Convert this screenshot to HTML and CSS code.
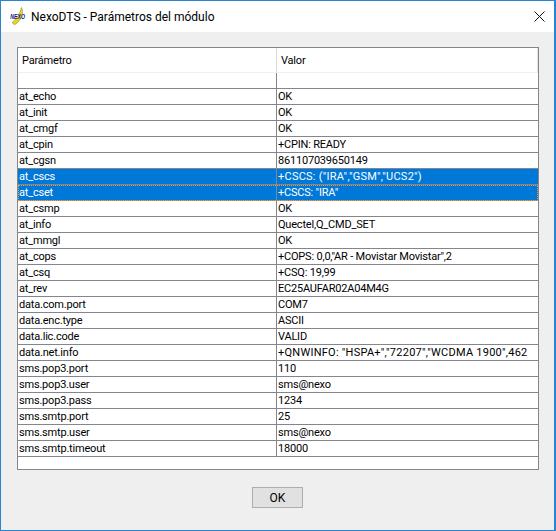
FILE: index.html
```html
<!DOCTYPE html>
<html lang="es">
<head>
  <meta charset="UTF-8" />
  <title>NexoDTS - Parámetros del módulo</title>
  <link rel="stylesheet" href="styles.css">
</head>
<body>
  <div class="window">
    <div class="titlebar">
      <svg class="logo" width="16" height="18" viewBox="0 0 16 18">
        <path d="M11.5 0.5 C14 5 12 13 5 17.5 C3.5 17.5 2.5 16.5 2.5 15 C7 12 10 6 11.5 0.5 Z" fill="#e8d81c" stroke="#7d7a30" stroke-width="0.5"/>
        <text x="0.3" y="8.9" transform="scale(1 1.3)" class="logo-text">NEXO</text>
      </svg>
      <span class="title">NexoDTS - Parámetros del módulo</span>
      <svg class="close" width="11" height="11" viewBox="0 0 11 11">
        <path d="M0.5 0.5 L10.5 10.5 M10.5 0.5 L0.5 10.5" stroke="#111" stroke-width="1" fill="none"/>
      </svg>
    </div>
    <div class="content">
      <div class="grid">
        <div class="grid-header">
          <div class="col-a">Parámetro</div>
          <div class="col-b">Valor</div>
        </div>
        <div class="filter-row">
          <div class="col-a"></div>
          <div class="col-b"></div>
        </div>
        <div class="rows">
          <div class="row"><div class="col-a">at_echo</div><div class="col-b">OK</div></div>
          <div class="row"><div class="col-a">at_init</div><div class="col-b">OK</div></div>
          <div class="row"><div class="col-a">at_cmgf</div><div class="col-b">OK</div></div>
          <div class="row"><div class="col-a">at_cpin</div><div class="col-b">+CPIN: READY</div></div>
          <div class="row"><div class="col-a">at_cgsn</div><div class="col-b">861107039650149</div></div>
          <div class="row selected"><div class="col-a">at_cscs</div><div class="col-b loose">+CSCS: ("IRA","GSM","UCS2")</div></div>
          <div class="row selected focused"><div class="col-a">at_cset</div><div class="col-b">+CSCS: "IRA"</div></div>
          <div class="row"><div class="col-a">at_csmp</div><div class="col-b">OK</div></div>
          <div class="row"><div class="col-a">at_info</div><div class="col-b">Quectel,Q_CMD_SET</div></div>
          <div class="row"><div class="col-a">at_mmgl</div><div class="col-b">OK</div></div>
          <div class="row"><div class="col-a">at_cops</div><div class="col-b">+COPS: 0,0,"AR - Movistar Movistar",2</div></div>
          <div class="row"><div class="col-a">at_csq</div><div class="col-b">+CSQ: 19,99</div></div>
          <div class="row"><div class="col-a">at_rev</div><div class="col-b">EC25AUFAR02A04M4G</div></div>
          <div class="row"><div class="col-a">data.com.port</div><div class="col-b">COM7</div></div>
          <div class="row"><div class="col-a">data.enc.type</div><div class="col-b">ASCII</div></div>
          <div class="row"><div class="col-a">data.lic.code</div><div class="col-b">VALID</div></div>
          <div class="row"><div class="col-a">data.net.info</div><div class="col-b loose">+QNWINFO: "HSPA+","72207","WCDMA 1900",462</div></div>
          <div class="row"><div class="col-a">sms.pop3.port</div><div class="col-b">110</div></div>
          <div class="row"><div class="col-a">sms.pop3.user</div><div class="col-b">sms@nexo</div></div>
          <div class="row"><div class="col-a">sms.pop3.pass</div><div class="col-b">1234</div></div>
          <div class="row"><div class="col-a">sms.smtp.port</div><div class="col-b">25</div></div>
          <div class="row"><div class="col-a">sms.smtp.user</div><div class="col-b">sms@nexo</div></div>
          <div class="row"><div class="col-a">sms.smtp.timeout</div><div class="col-b">18000</div></div>
        </div>
      </div>
      <div class="footer">
        <button class="btn" type="button">OK</button>
      </div>
    </div>
  </div>
</body>
</html>
```

FILE: styles.css
```css
html, body {
  margin: 0;
  padding: 0;
  background: #fff;
}
body {
  font-family: Roboto, "Noto Sans", Arial, sans-serif;
  font-size: 11px;
  letter-spacing: -0.2px;
  color: #000;
}
.window {
  box-sizing: border-box;
  width: 556px;
  height: 531px;
  border: 1px solid #2a85d0;
  border-right-width: 2px;
  display: flex;
  flex-direction: column;
  background: #efefef;
}
.titlebar {
  height: 31px;
  flex: none;
  background: #fff;
  display: flex;
  align-items: center;
  padding: 0 9px 0 9px;
}
.logo {
  flex: none;
  margin-bottom: 1px;
}
.logo-text {
  font-family: "Liberation Sans", Arial, sans-serif;
  font-size: 5.2px;
  font-weight: bold;
  font-style: italic;
  letter-spacing: 0;
  fill: #14148c;
}
.title {
  margin-left: 5px;
  font-size: 12px;
  letter-spacing: 0;
  flex: 1;
}
.close {
  flex: none;
  margin-bottom: 1px;
}
.content {
  flex: 1;
  padding: 15px 16px 0;
  display: flex;
  flex-direction: column;
}
.grid {
  box-sizing: border-box;
  width: 522px;
  height: 423px;
  background: #fff;
  border: 1px solid #85858d;
  flex: none;
}
.grid-header {
  display: flex;
  height: 25px;
  box-sizing: border-box;
  border-bottom: 1px solid #f0f0f0;
  border-right: 1px solid #e3e3e3;
}
.grid-header .col-a {
  width: 259px;
  padding-left: 4px;
  line-height: 26px;
  border-right: 1px solid #d9d9d9;
  box-sizing: border-box;
}
.grid-header .col-b {
  padding-left: 4px;
  line-height: 26px;
}
.filter-row {
  display: flex;
  height: 15px;
}
.filter-row .col-a {
  width: 259px;
  box-sizing: border-box;
  border-right: 1px solid #85858d;
}
.rows {
  border-top: 1px solid #85858d;
  border-right: 1px solid #85858d;
  width: 520px;
}
.row {
  display: flex;
  height: 16px;
  box-sizing: border-box;
  border-bottom: 1px solid #85858d;
  line-height: 15px;
  white-space: nowrap;
  overflow: hidden;
}
.col-a {
  flex: none;
  width: 259px;
  box-sizing: border-box;
  padding-left: 1px;
  border-right: 1px solid #85858d;
}
.col-b {
  flex: 1;
  padding-left: 1px;
}
.col-b.loose {
  letter-spacing: 0.25px;
}
.row.selected {
  background: #0078d7;
  color: #fff;
}
.row.focused {
  outline: 1px dotted #e89a3c;
  outline-offset: -1px;
}
.footer {
  display: flex;
  justify-content: center;
  padding-top: 17px;
}
.btn {
  width: 51px;
  height: 21px;
  padding: 0;
  background: #e1e1e1;
  border: 1px solid #adadad;
  border-radius: 0;
  font-family: inherit;
  font-size: 12px;
  letter-spacing: 0;
  color: #000;
}
```
